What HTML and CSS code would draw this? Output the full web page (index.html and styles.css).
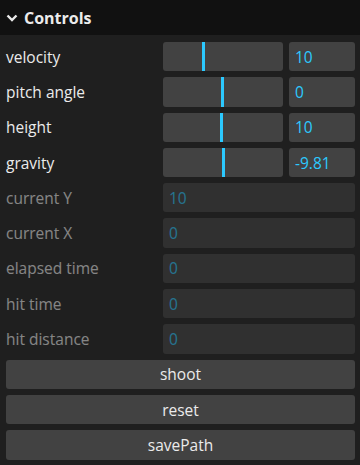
FILE: index.html
```html
<!DOCTYPE html>
<html lang="en">
<head>
    <meta charset="UTF-8">
    <meta name="viewport" content="width=device-width, initial-scale=1.0">
    <title>Controls</title>
    <link rel="stylesheet" href="styles.css">
</head>
<body>
    <div class="gui">
        <div class="title">
            <svg class="chevron" width="12" height="8" viewBox="0 0 12 8">
                <polyline points="1.5,1.5 6,6 10.5,1.5" fill="none" stroke="#ebebeb" stroke-width="2.4"/>
            </svg>
            <span>Controls</span>
        </div>
        <div class="children">
            <div class="row">
                <span class="name">velocity</span>
                <div class="widget">
                    <div class="slider"><div class="fill" style="width: 35%"></div></div>
                    <div class="number">10</div>
                </div>
            </div>
            <div class="row">
                <span class="name">pitch angle</span>
                <div class="widget">
                    <div class="slider"><div class="fill" style="width: 51%"></div></div>
                    <div class="number">0</div>
                </div>
            </div>
            <div class="row">
                <span class="name">height</span>
                <div class="widget">
                    <div class="slider"><div class="fill" style="width: 49.6%"></div></div>
                    <div class="number">10</div>
                </div>
            </div>
            <div class="row">
                <span class="name">gravity</span>
                <div class="widget">
                    <div class="slider"><div class="fill" style="width: 52%"></div></div>
                    <div class="number">-9.81</div>
                </div>
            </div>
            <div class="row disabled">
                <span class="name">current Y</span>
                <div class="widget"><div class="number wide">10</div></div>
            </div>
            <div class="row disabled">
                <span class="name">current X</span>
                <div class="widget"><div class="number wide">0</div></div>
            </div>
            <div class="row disabled">
                <span class="name">elapsed time</span>
                <div class="widget"><div class="number wide">0</div></div>
            </div>
            <div class="row disabled">
                <span class="name">hit time</span>
                <div class="widget"><div class="number wide">0</div></div>
            </div>
            <div class="row disabled">
                <span class="name">hit distance</span>
                <div class="widget"><div class="number wide">0</div></div>
            </div>
            <button class="btn">shoot</button>
            <button class="btn">reset</button>
            <button class="btn">savePath</button>
        </div>
    </div>
</body>
</html>
```

FILE: styles.css
```css
body {
    margin: 0;
    background-color: #1f1f1f;
    font-family: "Open Sans", "Noto Sans", sans-serif;
    font-size: 15.5px;
    color: #ebebeb;
}
.gui {
    width: 360px;
    height: 465px;
    background-color: #1f1f1f;
}
.title {
    height: 35px;
    background-color: #111111;
    display: flex;
    align-items: center;
    padding: 0 6px;
    box-sizing: border-box;
    font-weight: bold;
    font-size: 16px;
}
.chevron {
    margin-right: 6px;
    margin-top: 1px;
}
.children {
    padding: 7px 5px 6px 6px;
    display: flex;
    flex-direction: column;
    gap: 6px;
}
.row {
    display: flex;
    align-items: center;
    height: 29.3px;
}
.name {
    width: 157px;
    flex-shrink: 0;
}
.widget {
    flex: 1;
    display: flex;
    gap: 6px;
    height: 100%;
}
.slider {
    width: 120px;
    background-color: #424242;
    border-radius: 3px;
    overflow: hidden;
}
.fill {
    height: 100%;
    border-right: 3px solid #2cc9ff;
    box-sizing: border-box;
}
.number {
    flex: 1;
    background-color: #424242;
    border-radius: 3px;
    color: #2cc9ff;
    display: flex;
    align-items: center;
    padding-left: 6px;
}
.disabled {
    opacity: 0.5;
}
.btn {
    height: 29.3px;
    background-color: #424242;
    border: none;
    border-radius: 3px;
    color: #ebebeb;
    font-family: inherit;
    font-size: 15.5px;
    padding: 0;
}
```
